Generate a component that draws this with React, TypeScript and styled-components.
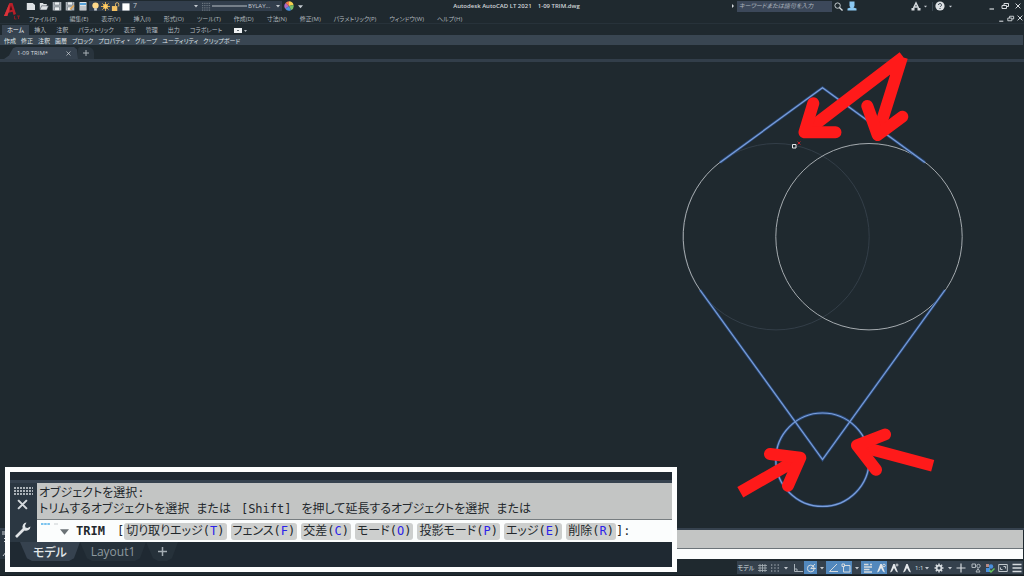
import React from "react";
import styled, { createGlobalStyle } from "styled-components";

const ui = `"Open Sans", "Noto Sans CJK JP", sans-serif`;

const Global = createGlobalStyle`
  * { box-sizing: border-box; }
  html, body { margin: 0; background: #1f292f; }
  body { font-family: ${ui}; font-size: 6px; color: #c4cad0; font-feature-settings: "palt"; }
  button, input, select { font: inherit; font-feature-settings: inherit; color: inherit; border: 0; padding: 0; margin: 0; background: none; border-radius: 0; appearance: none; outline: 0; }
  button { display: flex; align-items: center; justify-content: center; white-space: nowrap; }
  svg { display: block; flex: none; }
`;

const Page = styled.div`
  position: relative;
  display: flex;
  flex-direction: column;
  min-height: 100vh;
  background: #1f292f;
  overflow: hidden;
`;
const Header = styled.header`
  display: flex;
  height: 24px;
  border-bottom: 1px solid #27323a;
`;
const LogoButton = styled.button`
  width: 24px;
  height: 22px;
`;
const HeaderRows = styled.div`
  flex: 1;
  display: flex;
  flex-direction: column;
  min-width: 0;
`;
const TitleRow = styled.div`
  display: grid;
  grid-template-columns: 430fr auto 445fr;
  align-items: center;
  height: 12px;
`;
const Group = styled.div<{ $gap?: number; $before?: number }>`
  display: flex;
  align-items: center;
  gap: ${(p) => p.$gap ?? 0}px;
  margin-left: ${(p) => p.$before ?? 0}px;
`;
const QuickButton = styled.button`
  width: 13px;
  height: 12px;
`;
const LayerBox = styled.label`
  display: flex;
  align-items: center;
  gap: 1px;
  width: 111px;
  height: 10px;
  padding: 0 2px;
  background: #323e4c;
  select { flex: 1; min-width: 0; font-size: 7px; line-height: 10px; padding-left: 2px; }
`;
const LineBox = styled(LayerBox)`
  width: 82px;
  select { font-size: 6px; padding-left: 0; }
`;
const Title = styled.h1`
  margin: 0;
  font-size: 6px;
  font-weight: 600;
  line-height: 12px;
  white-space: pre;
  color: #d0d5d9;
`;
const TitleRight = styled(Group)`
  justify-content: flex-end;
`;
const Search = styled.input`
  width: 95px;
  height: 11px;
  padding: 0 2px;
  background: #3c485a;
  font-style: italic;
  &::placeholder { color: #aeb6bf; opacity: 1; }
`;
const IconButton = styled.button<{ $w?: number }>`
  width: ${(p) => p.$w ?? 13}px;
  height: 12px;
`;
const Divider = styled.span`
  width: 1px;
  height: 9px;
  margin-left: 3px;
  background: #3a464f;
`;
const MenuRow = styled.nav`
  display: flex;
  align-items: center;
  justify-content: space-between;
  height: 12px;
  padding-left: 5px;
`;
const MenuButton = styled.button`
  height: 12px;
  color: #b0b8be;
`;
const Tabs = styled.nav`
  display: flex;
  align-items: center;
  height: 11px;
  padding-left: 2px;
`;
const RibbonTab = styled.button<{ $active?: boolean }>`
  height: 10px;
  padding: 0 5px;
  color: ${(p) => (p.$active ? "#f0f3f5" : "#b4bbc1")};
  background: ${(p) => (p.$active ? "#36424f" : "none")};
`;
const Panels = styled.div`
  display: flex;
  align-items: center;
  gap: 5px;
  height: 10px;
  padding-left: 4px;
  margin-right: 1px;
  background: #394652;
  color: #dfe4e8;
`;
const PanelButton = styled.button`
  height: 10px;
  gap: 2px;
`;
const FileTabs = styled.div`
  display: flex;
  align-items: flex-end;
  height: 17px;
  padding-left: 4px;
  border-bottom: 3px solid #323e4a;
`;
const FileTab = styled.div`
  display: flex;
  align-items: center;
  justify-content: space-between;
  width: 74px;
  height: 12px;
  padding: 0 7px 0 13px;
  background: #36424f;
  clip-path: polygon(0 100%, 5px 70%, 9px 10%, 12px 0, calc(100% - 4px) 0, calc(100% - 1px) 20%, 100% 100%);
  color: #d5dade;
`;
const NewFile = styled.button`
  width: 16px;
  height: 12px;
  border-radius: 3px 6px 0 0;
  background: #29343d;
`;
const Canvas = styled.main`
  flex: 1;
  display: flex;
  justify-content: flex-end;
  min-height: 466px;
  svg { overflow: visible; position: relative; }
`;
const CommandDock = styled.section`
  display: flex;
  border-top: 2px solid #36424f;
`;
const DockHandle = styled.div`
  width: 10px;
  display: flex;
  flex-direction: column;
  align-items: flex-start;
  background: #2b3742;
`;
const DockBody = styled.div`
  flex: 1;
  margin-right: 1px;
`;
const DockHistory = styled.div`
  height: 19px;
  background: #c3c5c4;
  border-bottom: 1px solid #6c7479;
`;
const DockInput = styled.input`
  display: block;
  width: 100%;
  height: 10px;
  background: #fbfdfd;
`;
const StatusBar = styled.footer`
  display: flex;
  justify-content: flex-end;
  height: 17px;
  padding: 2px 1px 2px 0;
  border-bottom: 1px solid #161d22;
`;
const StatusButton = styled.button<{ $w: number; $on?: boolean }>`
  width: ${(p) => p.$w}px;
  height: 13px;
  background: ${(p) => (p.$on ? "#5288bd" : "#35414d")};
  color: #dce1e5;
`;
const Zoomed = styled.section`
  position: absolute;
  left: 5px;
  right: 347px;
  bottom: 4px;
  border: 5px solid #fdfefe;
  background: #1f2932;
  font-family: "DejaVu Sans Mono", "Noto Sans CJK JP", monospace;
  font-size: 12px;
  color: #23282c;
`;
const ZoomBody = styled.div`
  display: flex;
  margin-top: 8px;
  border-top: 3px solid #36424f;
`;
const ZoomHandle = styled.div`
  width: 27px;
  display: flex;
  flex-direction: column;
  align-items: center;
  gap: 4px;
  padding: 4px 2px 3px 0;
  background: #2b3742;
  button:last-child { margin-top: auto; }
`;
const ZoomMain = styled.div`
  flex: 1;
  min-width: 0;
`;
const History = styled.div`
  height: 37px;
  padding: 2px 0 0 2px;
  background: #c3c5c4;
  border-bottom: 1px solid #777d80;
  line-height: 16px;
  white-space: nowrap;
  p { margin: 0; }
  span { margin: 0 10px; }
`;
const Prompt = styled.div`
  display: flex;
  align-items: center;
  height: 22px;
  padding-left: 4px;
  background: #fbfdfd;
  white-space: nowrap;
  input { flex: 1; min-width: 0; height: 20px; }
`;
const RecentIcon = styled.svg`
  align-self: flex-start;
  margin-right: 2px;
`;
const Command = styled.span`
  padding: 0 12px 0 7px;
  font-weight: 700;
`;
const Options = styled.div`
  display: flex;
  gap: 4px;
`;
const Option = styled.button`
  display: block;
  height: 17px;
  padding: 0 2px;
  border-radius: 3px;
  background: #cdcfce;
  line-height: 17px;
  kbd { font: inherit; }
  b { font-weight: 400; color: #2b22e8; }
`;
const LayoutTabs = styled.nav`
  display: flex;
  height: 25px;
  padding-left: 10px;
  font-family: ${ui};
`;
const LayoutTab = styled.button<{ $active?: boolean; $w: number }>`
  width: ${(p) => p.$w}px;
  height: 19px;
  font-size: 12px;
  font-weight: ${(p) => (p.$active ? 500 : 400)};
  color: ${(p) => (p.$active ? "#e2e6e9" : "#8e999f")};
  background: ${(p) => (p.$active ? "#36424f" : "#26313a")};
  clip-path: polygon(0 0, 100% 0, calc(100% - 6px) 85%, calc(100% - 11px) 100%, 12px 100%, 7px 85%);
`;

const Caret = ({ s = 4, c = "#c4cad0" }: { s?: number; c?: string }) => (
  <svg width={s} height={s} viewBox="0 0 4 4"><path d="M0 1h4L2 3.4z" fill={c} /></svg>
);
const Icon = ({ children, s = 10 }: { children: React.ReactNode; s?: number }) => (
  <svg width={s} height={s} viewBox="0 0 10 10" fill="none" stroke="#d5dade" strokeWidth="1">{children}</svg>
);
const Cross = ({ s = 6, w = 1 }: { s?: number; w?: number }) => (
  <svg width={s} height={s} viewBox="0 0 6 6"><path d="M.6.6l4.8 4.8M5.4.6L.6 5.4" stroke="#d5dade" strokeWidth={w} /></svg>
);
const Restore = () => <path d="M2 4.5h4.5v3H2zM4 4.5V2.5h4.5v3h-2" />;
const Minimize = () => <path d="M2.5 8h4.5" strokeWidth="1.2" />;

const Logo = () => (
  <svg width="18" height="20" viewBox="0 0 18 20">
    <path d="M1 15L6.500 2h3l3.500 11-2.400 1-1-3.200-4.300.9L4.300 15z" fill="#b81f29" />
    <path d="M6.400 9.400L8 4.500l1.400 4.300z" fill="#4c1319" />
    <path d="M1 15L6.500 2l-.2 7.500L4.300 15z" fill="#d9333a" />
    <path d="M11.500 15v3h2M14 15h3M15.500 15v3" stroke="#8c1a23" fill="none" />
  </svg>
);

const quick: [string, React.ReactNode][] = [
  ["新規", <path d="M.8 2h6l2.200 2v5H.8z" fill="#dde1e4" stroke="none" />],
  ["開く", <><path d="M.8 8.500V2h3l1 1h3v1.500" fill="#dde1e4" stroke="none" /><path d="M.8 9l1.800-4.200h7L7.800 9z" fill="#dde1e4" stroke="#293440" strokeWidth=".5" /></>],
  ["上書き保存", <><path d="M.7 1h8.600v8.500H.7z" fill="#aab1b7" stroke="none" /><path d="M2.500 1h5v3h-5zM2.500 6h5v3.500h-5z" fill="#eceff1" stroke="#5b646c" strokeWidth=".5" /></>],
  ["名前を付けて保存", <><path d="M.7 1h8.600v8.500H.7z" fill="#aab1b7" stroke="none" /><path d="M2.500 1h5v3h-5zM2.500 6h4v3.500h-4z" fill="#eceff1" stroke="#5b646c" strokeWidth=".5" /><path d="M5 8.500L9 4.500" stroke="#e2a350" strokeWidth="1.600" /></>],
  ["印刷", <><path d="M1.500 1h7v8.500h-7z" fill="#e1e5e8" stroke="none" /><path d="M2 2h6v2H2z" fill="#57a3db" stroke="none" /><path d="M2.500 6h5M2.500 8h5" stroke="#59646e" strokeDasharray="1 1" /></>],
];

const menus = ["ファイル(F)", "編集(E)", "表示(V)", "挿入(I)", "形式(O)", "ツール(T)", "作成(D)", "寸法(N)", "修正(M)", "パラメトリック(P)", "ウィンドウ(W)", "ヘルプ(H)"];
const ribbon = ["ホーム", "挿入", "注釈", "パラメトリック", "表示", "管理", "出力", "コラボレート"];
const panels = ["作成", "修正", "注釈", "画層", "ブロック", "プロパティ", "グループ", "ユーティリティ", "クリップボード"];
const options = [["切り取りエッジ", "T"], ["フェンス", "F"], ["交差", "C"], ["モード", "O"], ["投影モード", "P"], ["エッジ", "E"], ["削除", "R"]];

const compass = <path d="M1 9.500L4.300 1h1.400L9 9.500 7 8.500 5 5 3 8.500z" fill="#e3e7ea" stroke="none" />;
const gearTeeth = [0, 45, 90, 135];
const status: { l: string; w: number; on?: boolean; i: React.ReactNode }[] = [
  { l: "モデル空間", w: 18, i: "モデル" },
  { l: "グリッド", w: 14, i: <Icon><path d="M3 1v8M5.500 1v8M8 1v8M1 2.500h9M1 5h9M1 7.500h9" strokeWidth=".8" stroke="#a9b2b9" /></Icon> },
  { l: "スナップ", w: 12, i: <Icon><path d="M1 2h9M1 5h9M1 8h9" strokeDasharray="1.300 2" stroke="#b9c1c7" /></Icon> },
  { l: "スナップ設定", w: 10, i: <Caret /> },
  { l: "直交モード", w: 13, i: <Icon><path d="M1.500 1v7.500H10M1.500 6h2.500v2.500" stroke="#aab3ba" /></Icon> },
  { l: "極トラッキング", w: 13, on: true, i: <Icon><circle cx="4.800" cy="5.500" r="3.400" /><path d="M4.800 5.500h5M4.800 5.500L9 1" /></Icon> },
  { l: "極角度", w: 9, i: <Caret /> },
  { l: "オブジェクトスナップトラッキング", w: 13, on: true, i: <Icon><path d="M9 1L1.500 8.500H10" /></Icon> },
  { l: "オブジェクトスナップ", w: 13, on: true, i: <Icon><path d="M2.500 2.500h6.500v6.500h-6.500z" /><path d="M1 1h2.500v2.500H1z" fill="#5288bd" /></Icon> },
  { l: "スナップの種類", w: 9, i: <Caret /> },
  { l: "線の太さ", w: 13, on: true, i: <Icon><path d="M1 1.500h4.500M1 4h8M1 6.500h5.500M1 9h8M7 1.500h2" strokeWidth="1.400" /></Icon> },
  { l: "注釈オブジェクト表示", w: 13, on: true, i: <Icon>{compass}<circle cx="8" cy="2.500" r="1.300" /></Icon> },
  { l: "尺度を追加", w: 13, i: <Icon>{compass}<path d="M6.500 2h3M8 .5v3" /></Icon> },
  { l: "注釈", w: 13, i: <Icon>{compass}</Icon> },
  { l: "注釈尺度", w: 18, i: <>1:1&nbsp;<Caret /></> },
  { l: "ワークスペース", w: 15, i: <Icon>{gearTeeth.map((a) => <path key={a} d="M5 .5v9" transform={`rotate(${a} 5 5)`} strokeWidth="1.500" />)}<circle cx="5" cy="5" r="2.500" strokeWidth="1.600" /><circle cx="5" cy="5" r="1.500" fill="#35414d" stroke="none" /></Icon> },
  { l: "ワークスペース切替", w: 7, i: <Caret /> },
  { l: "注釈モニター", w: 15, i: <Icon><path d="M5 .5v9M.5 5h9" strokeWidth="1.200" /></Icon> },
  { l: "選択表示", w: 15, i: <Icon><path d="M1 1h3.500v3.500H1zM5 9l2-3.500L9 9z" stroke="#aeb6bc" /><circle cx="7.500" cy="3" r="1.700" stroke="#aeb6bc" /></Icon> },
  { l: "ハードウェア", w: 13, i: <Icon><path d="M1 1h3v3H1z" fill="#b78b86" stroke="none" /><path d="M1 5h4v4H1z" fill="#4a90dc" stroke="none" /><circle cx="6" cy="3.500" r="2.200" fill="#4a90dc" stroke="none" /><path d="M4.500 7l1.500 2 3.500-3.500" stroke="#69c55d" strokeWidth="1.400" /></Icon> },
  { l: "フルスクリーン", w: 14, i: <Icon><path d="M.7 1.500h8.600v7H.7zM5.500 3.500h2v2M4.500 6.500h-2v-2" stroke="#c0c7cc" /></Icon> },
  { l: "カスタマイズ", w: 13, i: <Icon><path d="M.5 1.500h9M.5 5h9M.5 8.500h9" strokeWidth="1.300" /></Icon> },
];

const Drawing = () => (
  <svg width="354" height="466" viewBox="670 62 354 466" fill="none" role="img" aria-label="図面">
    <circle cx="776" cy="236.700" r="93.200" stroke="#333e48" />
    <path d="M720 162.300A93.200 93.200 0 0 0 700.400 290.500" stroke="#a5abaf" />
    <circle cx="869" cy="236.700" r="93.200" stroke="#a5abaf" />
    {[["#2a4a7a", 2.8], ["#7c9fda", 1.2]].map(([c, w]) => (
      <g key={c} stroke={c as string} strokeWidth={w}>
        <path d="M720 162.500L822.500 87.700 925 162.500M700 290l122.500 169.500L945 290" />
        <circle cx="822.500" cy="459.700" r="46.700" />
      </g>
    ))}
    <path d="M792.500 144.500h3.500v3.500h-3.500z" stroke="#e6e8ea" fill="#1f292f" />
    <path d="M797.500 141.500l3 3M800.500 141.500l-3 3" stroke="#b92028" />
    <g stroke="#ff1a1a" strokeWidth="12" strokeLinejoin="round">
      <path d="M903.300 57L804.500 132.500M902 57L877.500 135M740.300 492.300L800 458M932.700 465.700L857 445.500" />
      <path strokeLinecap="round" d="M813.300 103.300L804.500 132.300H835.500M867.300 106L877.700 135 902.300 116.700M770 454L800.300 457.700 788 485.700M885 434.500L857 445.300 876 469.700" />
    </g>
  </svg>
);

export default function App() {
  return (
    <Page>
      <Global />
      <Header>
        <LogoButton aria-label="アプリケーションメニュー"><Logo /></LogoButton>
        <HeaderRows>
          <TitleRow>
            <Group>
              {quick.map(([l, i]) => <QuickButton key={l} aria-label={l}><Icon>{i}</Icon></QuickButton>)}
              <LayerBox>
                <Icon s={9}><circle cx="5" cy="4" r="3.500" fill="#ffd889" stroke="none" /><path d="M3.500 7h3v2.500h-3z" fill="#d3d7da" stroke="none" /></Icon>
                <Icon s={9}><path d="M5 0v10M0 5h10M1.500 1.500l7 7M8.500 1.500l-7 7" stroke="#e9b452" /><circle cx="5" cy="5" r="2.700" fill="#ffcb62" stroke="none" /></Icon>
                <Icon s={9}><path d="M1 4.500h6V10H1z" fill="#f3c063" stroke="none" /><path d="M5 4.500V2.500a1.800 1.800 0 0 1 3.600 0V5" stroke="#e8bd6e" /></Icon>
                <Icon s={9}><path d="M1.500 1.500h8v8h-8z" fill="#fff" stroke="none" /></Icon>
                <select aria-label="画層"><option>7</option></select>
                <Caret />
              </LayerBox>
              <LineBox>
                <Icon s={9}><path d="M0 1.500h10M0 4h10M0 6.500h10M0 9h10" strokeDasharray="1 1" stroke="#89939b" /></Icon>
                <svg width="35" height="2"><path d="M0 1h35" stroke="#b9c0c6" /></svg>
                <select aria-label="線種"><option>BYLAY...</option></select>
                <Caret />
              </LineBox>
              <IconButton $w={14} aria-label="色">
                <Icon><g stroke="none"><path d="M5 5V.3A4.700 4.700 0 0 1 9.500 4z" fill="#f3cf4e" /><path d="M5 5l4.500-1A4.700 4.700 0 0 1 7 9.300z" fill="#76bd67" /><path d="M5 5l2 4.300A4.700 4.700 0 0 1 1.200 7.700z" fill="#4a92df" /><path d="M5 5L1.200 7.700A4.700 4.700 0 0 1 1.500 2z" fill="#ad68c6" /><path d="M5 5L1.500 2A4.700 4.700 0 0 1 5 .3z" fill="#f0784a" /></g></Icon>
              </IconButton>
              <IconButton $w={8} aria-label="その他"><Caret s={5} /></IconButton>
            </Group>
            <Title>Autodesk AutoCAD LT 2021    1-09 TRIM.dwg</Title>
            <TitleRight>
              <IconButton $w={8} aria-label="検索を展開"><svg width="4" height="4"><path d="M1 0v4l2-2z" fill="#d5dade" /></svg></IconButton>
              <Search aria-label="検索" placeholder="キーワードまたは語句を入力" />
              <IconButton aria-label="検索する"><Icon s={9}><circle cx="4" cy="4" r="3" /><path d="M6 6l3.500 3.500" strokeWidth="1.500" /></Icon></IconButton>
              <IconButton aria-label="サインイン"><Icon><path d="M2.500 .5h5v4.500L6.500 6.500l3 1v2h-9v-2l3-1L2.500 5z" fill="#8bc9f3" stroke="none" /></Icon></IconButton>
              <Group $before={52}>
                <IconButton $w={11} aria-label="Autodesk App Store">
                  <Icon><path d="M2.500 7L5 2l2.500 5M3 6h4" strokeWidth="1.500" /><path d="M.5 7h3v2.500h-3zM6.500 7h3v2.500h-3z" fill="#d5dade" stroke="none" /></Icon>
                </IconButton>
                <IconButton $w={8} aria-label="アプリ一覧"><Caret s={3} /></IconButton>
                <Divider />
                <IconButton $w={14} aria-label="ヘルプ"><Icon><circle cx="5" cy="5" r="4.600" fill="#dde1e4" stroke="none" /><path d="M3.500 4a1.500 1.500 0 1 1 2 1.400L5 6M5 7v1" stroke="#37434e" /></Icon></IconButton>
                <IconButton $w={6} aria-label="ヘルプ一覧"><Caret s={3} /></IconButton>
              </Group>
              <Group $before={32}>
                <IconButton aria-label="最小化"><Icon><Minimize /></Icon></IconButton>
                <IconButton aria-label="元に戻す"><Icon><Restore /></Icon></IconButton>
                <IconButton aria-label="閉じる"><Cross /></IconButton>
              </Group>
            </TitleRight>
          </TitleRow>
          <MenuRow>
            <Group $gap={13}>{menus.map((m) => <MenuButton key={m}>{m}</MenuButton>)}</Group>
            <Group>
              <IconButton $w={10} aria-label="図面を最小化"><Icon s={9}><Minimize /></Icon></IconButton>
              <IconButton $w={9} aria-label="図面を元に戻す"><Icon s={9}><Restore /></Icon></IconButton>
              <IconButton $w={9} aria-label="図面を閉じる"><Cross /></IconButton>
            </Group>
          </MenuRow>
        </HeaderRows>
      </Header>
      <Tabs>
        {ribbon.map((t, i) => <RibbonTab key={t} $active={i === 0}>{t}</RibbonTab>)}
        <RibbonTab aria-label="リボン表示"><svg width="16" height="6"><path d="M2 1h8v5H2z" fill="#eef1f3" /><path d="M5 3h2v1H5z" fill="#626c74" /><path d="M12 3h3l-1.500 2z" fill="#b4bbc1" /></svg></RibbonTab>
      </Tabs>
      <Panels>
        {panels.map((p) => <PanelButton key={p}>{p}{p === "プロパティ" && <Caret s={3} />}</PanelButton>)}
      </Panels>
      <FileTabs>
        <FileTab>1-09 TRIM*<button aria-label="タブを閉じる"><Cross s={5} w={0.8} /></button></FileTab>
        <NewFile aria-label="新規図面"><svg width="6" height="6"><path d="M3 0v6M0 3h6" stroke="#a9b1b7" /></svg></NewFile>
      </FileTabs>
      <Canvas><Drawing /></Canvas>
      <CommandDock>
        <DockHandle>
          <svg width="6" height="28"><path d="M2 2h3M2 4h3M4 8l2 2M4 12l2-2M3 26l3-4" stroke="#cdd2d6" fill="none" /></svg>
        </DockHandle>
        <DockBody><DockHistory /><DockInput aria-label="コマンド" /></DockBody>
      </CommandDock>
      <StatusBar>
        {status.map((s) => <StatusButton key={s.l} aria-label={s.l} $w={s.w} $on={s.on}>{s.i}</StatusButton>)}
      </StatusBar>
      <Zoomed>
        <ZoomBody>
          <ZoomHandle>
            <svg width="20" height="8"><path d="M1 1h19M1 4h19M1 7h19" stroke="#d5dade" strokeDasharray="2 1" strokeWidth="1.500" /></svg>
            <button aria-label="コマンドを閉じる"><Cross s={11} w={1.1} /></button>
            <button aria-label="カスタマイズ">
              <svg width="18" height="18" viewBox="0 0 18 18"><path d="M2 16l8-8" stroke="#e0e4e7" strokeWidth="2.600" /><path d="M12.500 1.500a4.500 4.500 0 0 0-3.800 6L10.500 9.500a4.500 4.500 0 0 0 6-4l-3 1.500-2-.5-.5-2z" fill="#e0e4e7" /></svg>
            </button>
          </ZoomHandle>
          <ZoomMain>
            <History>
              <p>オブジェクトを選択:</p>
              <p>トリムするオブジェクトを選択 または<span>[Shift]</span>を押して延長するオブジェクトを選択 または</p>
            </History>
            <Prompt>
              <RecentIcon width="17" height="5"><path d="M0 4h9" stroke="#4fb0ea" strokeWidth="1.500" strokeDasharray="2.500 .7" /><path d="M13 4h4" stroke="#c9ced1" /></RecentIcon>
              <Caret s={9} c="#6b7276" />
              <Command>TRIM</Command>[
              <Options>{options.map(([t, k]) => <Option key={k}>{t}<kbd>(<b>{k}</b>)</kbd></Option>)}</Options>
              ]:
              <input aria-label="コマンド入力" />
            </Prompt>
          </ZoomMain>
        </ZoomBody>
        <LayoutTabs>
          <LayoutTab $active $w={60}>モデル</LayoutTab>
          <LayoutTab $w={66}>Layout1</LayoutTab>
          <LayoutTab $w={32} aria-label="新規レイアウト"><svg width="9" height="9"><path d="M4.500 0v9M0 4.500h9" stroke="#a4adb3" strokeWidth="1.500" /></svg></LayoutTab>
        </LayoutTabs>
      </Zoomed>
    </Page>
  );
}
